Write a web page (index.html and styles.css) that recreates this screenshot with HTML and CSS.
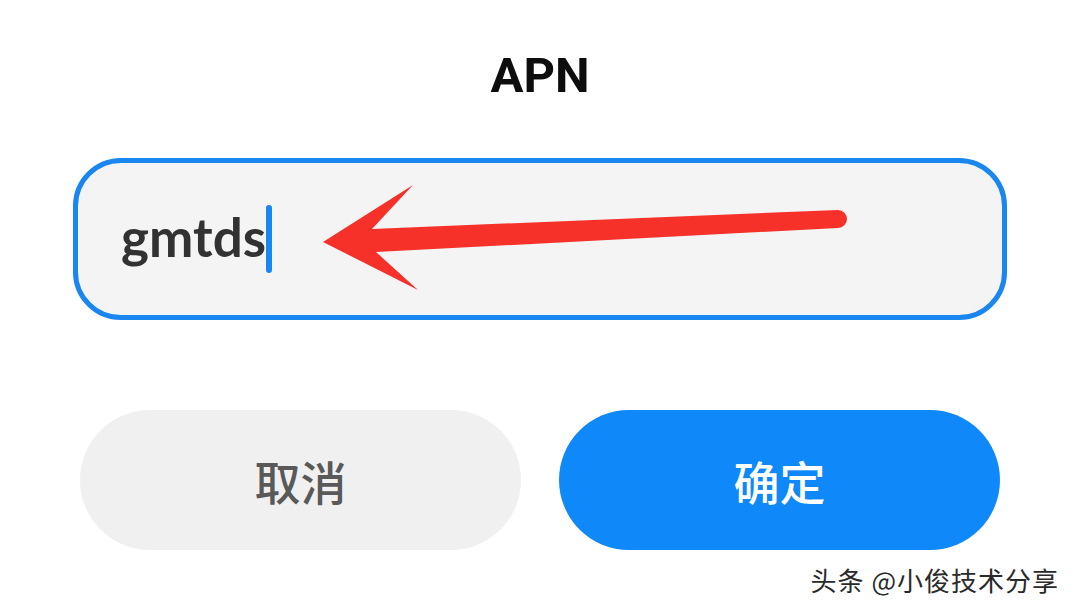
FILE: index.html
```html
<!DOCTYPE html>
<html lang="zh">
<head>
<meta charset="utf-8">
<title>APN</title>
<link rel="stylesheet" href="styles.css">
</head>
<body>
<div class="page">
  <h1 class="title">APN</h1>
  <div class="field">
    <span class="value">gmtds</span><span class="caret"></span>
  </div>
  <div class="actions">
    <div class="btn btn-cancel">取消</div>
    <div class="btn btn-ok">确定</div>
  </div>
  <svg class="arrow" viewBox="0 0 1080 614" width="1080" height="614" aria-hidden="true">
    <path d="M323,242 L413,185 L372,229 L838,210 A9,9 0 0 1 838,228 L376,252 L418,290 Z" fill="#f5312a"/>
  </svg>
  <div class="watermark">头条 @小俊技术分享</div>
</div>
</body>
</html>
```

FILE: styles.css
```css
html, body {
  margin: 0;
  padding: 0;
  background: #ffffff;
}
.page {
  position: relative;
  width: 1080px;
  height: 614px;
  overflow: hidden;
  font-family: "Noto Sans CJK SC", "Noto Sans", sans-serif;
}
.title {
  margin: 0;
  padding-top: 52px;
  height: 48px;
  font-family: Roboto, "Liberation Sans", sans-serif;
  font-weight: 700;
  font-size: 49px;
  line-height: 48px;
  text-align: center;
  color: #0d0d0d;
}
.field {
  box-sizing: border-box;
  margin: 58px 73px 0;
  height: 162px;
  border: 5px solid #1a86ef;
  border-radius: 48px;
  background: #f4f4f4;
  display: flex;
  align-items: center;
  padding-left: 43px;
}
.value {
  font-family: Lato, "Open Sans", sans-serif;
  font-weight: 700;
  font-size: 53px;
  line-height: 54px;
  color: #323232;
  padding-bottom: 4px;
}
.caret {
  display: inline-block;
  width: 6px;
  height: 68px;
  border-radius: 3px;
  background: #1a86ef;
  margin-left: 0;
}
.actions {
  display: flex;
  gap: 38px;
  margin: 90px 80px 0;
}
.btn {
  flex: 1;
  height: 140px;
  border-radius: 70px;
  display: flex;
  align-items: center;
  justify-content: center;
  font-size: 46px;
  font-weight: 500;
}
.btn-cancel {
  background: #f0f0f0;
  color: #595959;
}
.btn-ok {
  background: #0f88fa;
  color: #ffffff;
}
.arrow {
  position: absolute;
  left: 0;
  top: 0;
  pointer-events: none;
}
.watermark {
  position: absolute;
  right: 21px;
  top: 565px;
  font-size: 26px;
  line-height: 30px;
  letter-spacing: 1px;
  color: #2a2a2a;
  text-shadow: 1px 1px 0 #ffffff, -1px 0 0 #ffffff;
}
```
